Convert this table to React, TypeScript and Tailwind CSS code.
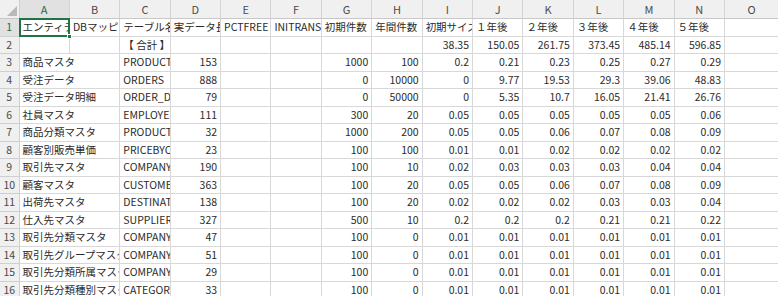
import React from 'react';

// 容量見積シート（Excel 風グリッド）

type DataRow = {
    name: string;
    table: string;
    len: string;
    init: string;
    year: string;
    sizes: string[];
};

const rows: DataRow[] = [
    { name: '商品マスタ', table: 'PRODUCTS', len: '153', init: '1000', year: '100', sizes: ['0.2', '0.21', '0.23', '0.25', '0.27', '0.29'] },
    { name: '受注データ', table: 'ORDERS', len: '888', init: '0', year: '10000', sizes: ['0', '9.77', '19.53', '29.3', '39.06', '48.83'] },
    { name: '受注データ明細', table: 'ORDER_DETAILS', len: '79', init: '0', year: '50000', sizes: ['0', '5.35', '10.7', '16.05', '21.41', '26.76'] },
    { name: '社員マスタ', table: 'EMPLOYEES', len: '111', init: '300', year: '20', sizes: ['0.05', '0.05', '0.05', '0.05', '0.05', '0.06'] },
    { name: '商品分類マスタ', table: 'PRODUCT_CATEGORIES', len: '32', init: '1000', year: '200', sizes: ['0.05', '0.05', '0.06', '0.07', '0.08', '0.09'] },
    { name: '顧客別販売単価', table: 'PRICEBYCUSTOMER', len: '23', init: '100', year: '100', sizes: ['0.01', '0.01', '0.02', '0.02', '0.02', '0.02'] },
    { name: '取引先マスタ', table: 'COMPANY', len: '190', init: '100', year: '10', sizes: ['0.02', '0.03', '0.03', '0.03', '0.04', '0.04'] },
    { name: '顧客マスタ', table: 'CUSTOMERS', len: '363', init: '100', year: '20', sizes: ['0.05', '0.05', '0.06', '0.07', '0.08', '0.09'] },
    { name: '出荷先マスタ', table: 'DESTINATIONS', len: '138', init: '100', year: '20', sizes: ['0.02', '0.02', '0.02', '0.03', '0.03', '0.04'] },
    { name: '仕入先マスタ', table: 'SUPPLIERS', len: '327', init: '500', year: '10', sizes: ['0.2', '0.2', '0.2', '0.21', '0.21', '0.22'] },
    { name: '取引先分類マスタ', table: 'COMPANY_CLASS', len: '47', init: '100', year: '0', sizes: ['0.01', '0.01', '0.01', '0.01', '0.01', '0.01'] },
    { name: '取引先グループマスタ', table: 'COMPANY_GROUP', len: '51', init: '100', year: '0', sizes: ['0.01', '0.01', '0.01', '0.01', '0.01', '0.01'] },
    { name: '取引先分類所属マスタ', table: 'COMPANY_CLASS_MEMBER', len: '29', init: '100', year: '0', sizes: ['0.01', '0.01', '0.01', '0.01', '0.01', '0.01'] },
    { name: '取引先分類種別マスタ', table: 'CATEGORY_TYPE', len: '33', init: '100', year: '0', sizes: ['0.01', '0.01', '0.01', '0.01', '0.01', '0.01'] },
];

const letters = ['A', 'B', 'C', 'D', 'E', 'F', 'G', 'H', 'I', 'J', 'K', 'L', 'M', 'N'];

const cellBase = 'h-full shrink-0 border-r border-b border-[#d8d8d8] overflow-hidden whitespace-nowrap flex items-center';
const col = 'w-[50.4px]';
const wide = 'w-[100.8px]';

const Txt: React.FC<{ v?: string; right?: boolean; w?: string }> = ({ v, right, w = col }) => (
    <div className={`${cellBase} ${w} ${right ? 'justify-end pr-[3px]' : 'justify-start pl-[3px]'}`}>{v}</div>
);

const RowHead: React.FC<{ n: number; active?: boolean }> = ({ n, active }) => (
    <div className={`h-full w-[19.5px] shrink-0 flex items-center justify-center border-r border-b border-[#cfcfcf] text-[10.5px] ${active ? 'bg-[#e1e1e1] text-[#1e6b41]' : 'bg-[#f0f0f0] text-[#4a4a4a]'}`}>
        {n}
    </div>
);

const LastCol: React.FC = () => <div className="h-full flex-1 border-b border-[#d8d8d8]" />;

export default function App() {
    return (
        <div
            className="w-[778px] h-[296px] overflow-hidden bg-white text-[10.5px] text-[#2b2b2b]"
            style={{ fontFamily: '"Noto Sans CJK JP", "Noto Sans", sans-serif' }}
        >
            {/* 列見出し */}
            <div className="flex h-[19px] bg-[#f0f0f0] border-b border-[#c8c8c8]">
                <div className="w-[19.5px] shrink-0 h-full border-r border-[#cfcfcf] flex items-end justify-end p-[2px]">
                    <svg width="10" height="10" viewBox="0 0 10 10">
                        <polygon points="10,0 10,10 0,10" fill="#b9b9b9" />
                    </svg>
                </div>
                {letters.map((l, i) => (
                    <div
                        key={l}
                        className={`${col} shrink-0 h-full flex items-center justify-center border-r border-[#d4d4d4] text-[11px] ${i === 0 ? 'bg-[#e1e1e1] text-[#1e6b41]' : 'text-[#4a4a4a]'}`}
                    >
                        {l}
                    </div>
                ))}
                <div className="flex-1 h-full flex items-center justify-center text-[11px] text-[#4a4a4a]">O</div>
            </div>

            {/* 1 行目：項目名 */}
            <div className="flex h-[17.5px]">
                <RowHead n={1} active />
                <div className={`${cellBase} ${col} relative overflow-visible pl-[3px]`}>
                    <div className="overflow-hidden w-[47px]">エンティティ名</div>
                    <div className="absolute -left-px -top-px w-[51.4px] h-[18.5px] border-2 border-[#217346]" />
                    <div className="absolute -right-[3px] -bottom-[3px] w-[5px] h-[5px] bg-[#217346] border border-white" />
                </div>
                <Txt v="DBマッピング" />
                <Txt v="テーブル名" />
                <Txt v="実データ長" />
                <Txt v="PCTFREE" />
                <Txt v="INITRANS" />
                <Txt v="初期件数" />
                <Txt v="年間件数" />
                <Txt v="初期サイズ" />
                <Txt v="１年後" />
                <Txt v="２年後" />
                <Txt v="３年後" />
                <Txt v="４年後" />
                <Txt v="５年後" />
                <LastCol />
            </div>

            {/* 2 行目：合計 */}
            <div className="flex h-[17.5px]">
                <RowHead n={2} />
                <Txt />
                <Txt />
                <Txt v="【 合計 】" />
                <Txt />
                <Txt />
                <Txt />
                <Txt />
                <Txt />
                <Txt v="38.35" right />
                <Txt v="150.05" right />
                <Txt v="261.75" right />
                <Txt v="373.45" right />
                <Txt v="485.14" right />
                <Txt v="596.85" right />
                <LastCol />
            </div>

            {/* 明細行 */}
            {rows.map((r, i) => (
                <div key={r.name} className="flex h-[17.5px]">
                    <RowHead n={i + 3} />
                    <Txt v={r.name} w={wide} />
                    <Txt v={r.table} />
                    <Txt v={r.len} right />
                    <Txt />
                    <Txt />
                    <Txt v={r.init} right />
                    <Txt v={r.year} right />
                    {r.sizes.map((s, j) => (
                        <Txt key={j} v={s} right />
                    ))}
                    <LastCol />
                </div>
            ))}
        </div>
    );
}
